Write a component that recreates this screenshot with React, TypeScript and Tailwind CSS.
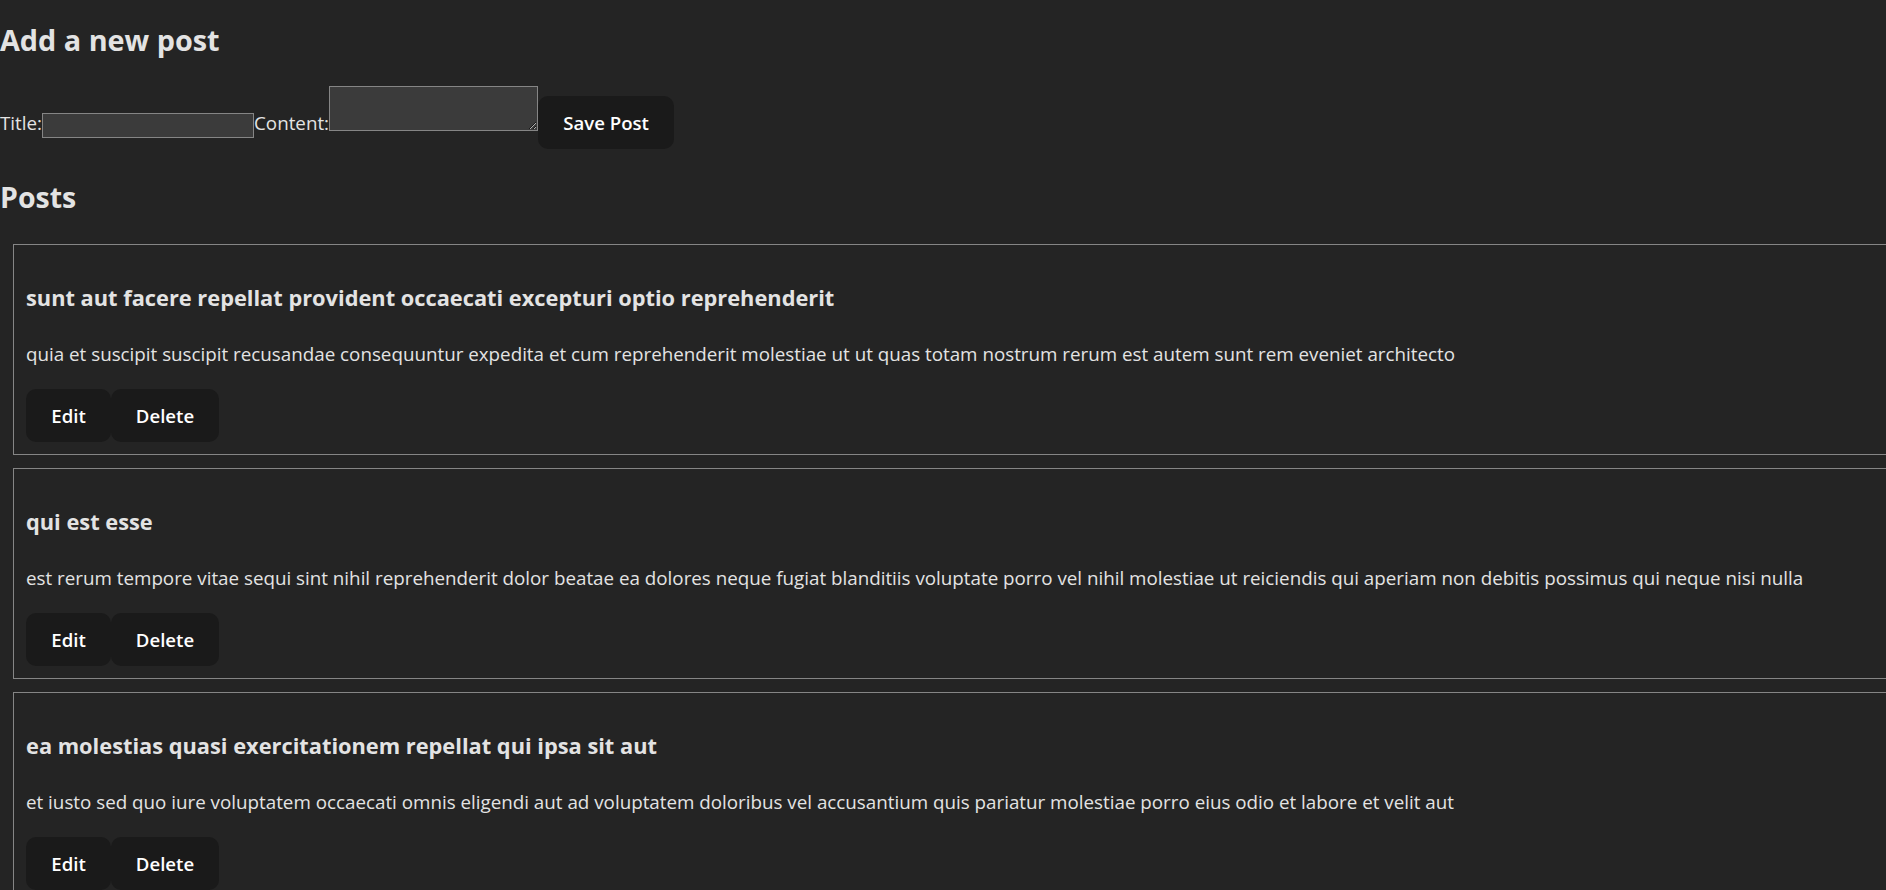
import React from 'react';

interface Post {
  id: number;
  title: string;
  body: string;
}

const POSTS: Post[] = [
  {
    id: 1,
    title: 'sunt aut facere repellat provident occaecati excepturi optio reprehenderit',
    body: 'quia et suscipit suscipit recusandae consequuntur expedita et cum reprehenderit molestiae ut ut quas totam nostrum rerum est autem sunt rem eveniet architecto',
  },
  {
    id: 2,
    title: 'qui est esse',
    body: 'est rerum tempore vitae sequi sint nihil reprehenderit dolor beatae ea dolores neque fugiat blanditiis voluptate porro vel nihil molestiae ut reiciendis qui aperiam non debitis possimus qui neque nisi nulla',
  },
  {
    id: 3,
    title: 'ea molestias quasi exercitationem repellat qui ipsa sit aut',
    body: 'et iusto sed quo iure voluptatem occaecati omnis eligendi aut ad voluptatem doloribus vel accusantium quis pariatur molestiae porro eius odio et labore et velit aut',
  },
];

const btn = 'h-[53px] rounded-[10px] bg-[#1a1a1a] text-center text-[18.6px] font-semibold leading-[29px] text-white';

const PostCard: React.FC<{ post: Post }> = ({ post }) => (
  <div className="ml-[13px] flex w-[1900px] shrink-0 flex-col border border-[#858585] px-[12px] pt-[36px] pb-[12px]">
    <h3 className="text-[21.8px] font-bold leading-[34px]">{post.title}</h3>
    <p className="mt-[25px] text-[18.8px] leading-[29px]">{post.body}</p>
    <div className="mt-[20px] flex">
      <button className={`${btn} w-[85px]`}>Edit</button>
      <button className={`${btn} w-[108px]`}>Delete</button>
    </div>
  </div>
);

export default function App() {
  return (
    <div className="h-screen overflow-hidden bg-[#242424] font-['Open_Sans','Liberation_Sans',sans-serif] text-[#e3e3e3] [color-scheme:dark]">
      <h2 className="pt-[18px] text-[28.8px] font-bold leading-[43px]">Add a new post</h2>

      <form className="mt-[25px] flex items-start text-[18.8px] leading-[29px]" onSubmit={(e) => e.preventDefault()}>
        <label className="mt-[23px]">Title:</label>
        <input type="text" className="mt-[27px] h-[25px] w-[212px] border border-[#858585] bg-[#3b3b3b]" />
        <label className="mt-[23px]">Content:</label>
        <textarea className="h-[45px] w-[209px] border border-[#858585] bg-[#3b3b3b]" />
        <button type="submit" className={`${btn} mt-[10px] w-[136px]`}>Save Post</button>
      </form>

      <h2 className="mt-[27px] text-[28.5px] font-bold leading-[43px]">Posts</h2>

      <div className="mt-[25px] flex flex-col gap-[13px]">
        {POSTS.map((post) => (
          <PostCard key={post.id} post={post} />
        ))}
      </div>
    </div>
  );
}
